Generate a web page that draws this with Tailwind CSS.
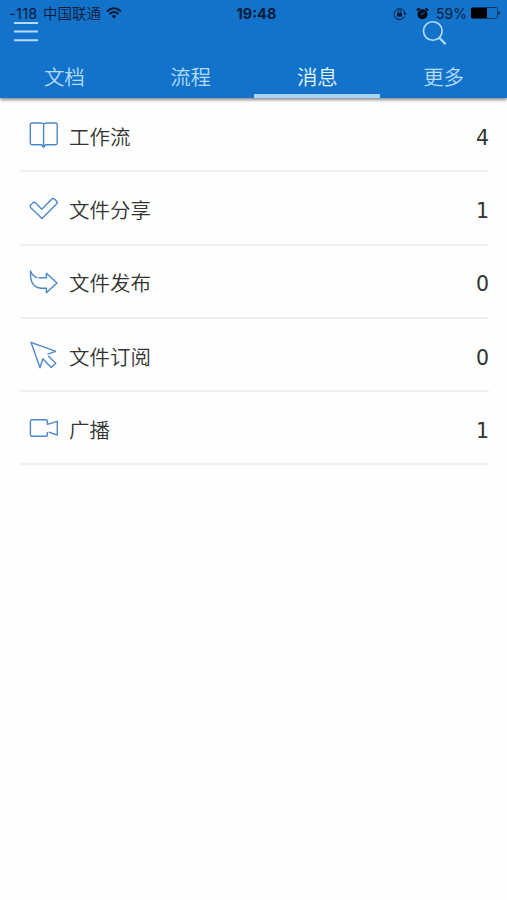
<!DOCTYPE html>
<html lang="zh-CN">

<head>
    <meta charset="UTF-8">
    <meta name="viewport" content="width=device-width, initial-scale=1.0">
    <title>消息</title>
    <script src="https://cdn.jsdelivr.net/npm/@tailwindcss/browser@4"></script>
</head>

<body class="min-h-screen overflow-hidden bg-[#fefefe] font-['Noto_Sans_CJK_SC_DemiLight','Noto_Sans_CJK_SC',sans-serif] font-[350] text-[#333]">
    <header class="flex h-[98px] flex-col bg-[#1373ca] shadow-[0_2px_3px_rgba(0,0,0,0.45)]">
        <!-- status bar -->
        <div class="grid h-[22px] grid-cols-3 pt-[5px] pr-[7px] pl-[9px] text-[14px] leading-[18px] font-normal text-[#061c38]">
            <div class="flex items-center gap-[5px] whitespace-nowrap">
                <span class="w-[29px] font-['Inter','Liberation_Sans',sans-serif] text-[14.5px] tracking-[0.3px]">-118</span>
                <span class="-translate-y-px text-[14.5px]">中国联通</span>
                <svg class="h-[12px] w-[16px] -translate-y-px" viewBox="0 0 16 12" fill="none" stroke="currentColor" stroke-width="2">
                    <path d="M1 4.4Q8 -1.8 15 4.4M3.4 7Q8 3 12.6 7" />
                    <path d="M5.5 9Q8 7 10.5 9L8 11.6Z" fill="currentColor" stroke="none" />
                </svg>
            </div>
            <div class="pl-[4px] text-center font-['Inter',sans-serif] text-[14.5px] font-bold">19:48</div>
            <div class="flex items-center justify-end font-['Inter','Liberation_Sans',sans-serif]">
                <svg class="mr-[9px] h-[13px] w-[14px] -translate-y-px" viewBox="0 0 14 13" fill="none" stroke="currentColor">
                    <path d="M11.5 9.5A5.5 5.5 0 1 1 12 6.5" />
                    <path d="M10.3 6h3.4L12 8.3Z" fill="currentColor" stroke="none" />
                    <path d="M4 6h5v3.6H4Z" fill="currentColor" stroke="none" />
                    <path d="M5 6V4.7a1.5 1.5 0 0 1 3 0V6" />
                </svg>
                <svg class="mr-[7px] h-[13px] w-[13px] -translate-y-px text-[#020a14]" viewBox="0 0 13 13">
                    <circle cx="6.5" cy="7.2" r="5" fill="currentColor" />
                    <path d="M.8 3.5L3.6 1.2M12.2 3.5L9.4 1.2" stroke="currentColor" stroke-width="1.8" />
                    <path d="M8.6 5L6.5 7.2H4.5" fill="none" stroke="#1373ca" stroke-width=".9" />
                </svg>
                <span class="mr-[4px]">59%</span>
                <svg class="h-[12px] w-[29px] shrink-0 -translate-y-px" viewBox="0 0 29 12">
                    <rect x=".5" y=".5" width="26" height="11" rx="1" fill="none" stroke="currentColor" stroke-width=".7" />
                    <rect x="0" y="1" width="16" height="10" fill="#000" />
                    <path d="M27.5 4v4Q29 7.5 29 6T27.5 4Z" fill="currentColor" />
                </svg>
            </div>
        </div>

        <!-- toolbar -->
        <div class="flex h-[33px] items-start justify-between pr-[60px] pl-[14px] text-[#b5dcff]">
            <svg class="h-[20px] w-[24px]" viewBox="0 0 24 20" fill="none" stroke="currentColor" stroke-width="1.9">
                <path d="M0 1h24M0 9.5h24M0 18.3h24" />
            </svg>
            <svg class="h-[25px] w-[25px] overflow-visible" viewBox="0 0 25 25" fill="none" stroke="currentColor">
                <circle cx="10.8" cy="9" r="9.3" stroke-width="1.6" />
                <path d="M17.3 15.7L23.6 22.2" stroke-width="2.3" />
            </svg>
        </div>

        <!-- tabs -->
        <nav class="grid flex-1 grid-cols-4 text-center text-[20.5px] leading-[43px] text-[#b5dcff]">
            <div class="pt-1 pl-[2px]">文档</div>
            <div class="pt-1 pl-px">流程</div>
            <div class="border-b-4 border-[#a9d3f8] text-[#e3f4ff]"><div class="h-[39px] pt-1 pl-px">消息</div></div>
            <div class="pt-1">更多</div>
        </nav>
    </header>

    <main class="mr-[18px] ml-[20px] pt-[1px] text-[20.5px]">
        <div class="flex h-[73.25px] items-center border-b-2 border-[#efefef] pt-[3px] pl-[9px]">
            <svg class="mr-[10px] h-[30px] w-[30px] -translate-y-px" viewBox="0 0 30 30" fill="none" stroke="#4c88c9" stroke-width="1.4" stroke-linejoin="round">
                <path d="M14.6 4.2Q13.8 3 12 3H3Q1.3 3 1.3 4.7V23Q1.3 24.7 3 24.7H12.5L14.6 27.2L16.7 24.7H26.5Q28.2 24.7 28.2 23V4.7Q28.2 3 26.5 3H17.2Q15.4 3 14.6 4.2V26" />
            </svg>
            <span class="flex-1">工作流</span>
            <span class="translate-y-[2px] font-['DejaVu_Sans',sans-serif] text-[20.5px] font-normal">4</span>
        </div>
        <div class="flex h-[73.25px] items-center border-b-2 border-[#efefef] pt-[3px] pl-[9px]">
            <svg class="mr-[10px] h-[30px] w-[30px] -translate-y-px" viewBox="0 0 30 30" fill="none" stroke="#4c88c9" stroke-width="1.4" stroke-linejoin="round">
                <path d="M1.5 12.3L4 9.8Q5.3 8.7 6.7 10L12.8 16.2L22.6 6.2Q24 4.8 25.4 6L27.7 8.2Q28.8 9.5 27.5 11L13 25.4L1.5 14.4Q.7 13.3 1.5 12.3Z" />
            </svg>
            <span class="flex-1">文件分享</span>
            <span class="translate-y-[2px] font-['DejaVu_Sans',sans-serif] text-[20.5px] font-normal">1</span>
        </div>
        <div class="flex h-[73.25px] items-center border-b-2 border-[#efefef] pt-[3px] pl-[9px]">
            <svg class="mr-[10px] h-[30px] w-[30px] -translate-y-px" viewBox="0 0 30 30" fill="none" stroke="#4c88c9" stroke-width="1.4" stroke-linejoin="round">
                <path d="M8.3 10.8Q3.5 9 1.5 4Q.7 20.8 12 21.2H17.4V25.7L28 16L17.4 6.2V10.7H9.5" />
            </svg>
            <span class="flex-1">文件发布</span>
            <span class="translate-y-[2px] font-['DejaVu_Sans',sans-serif] text-[20.5px] font-normal">0</span>
        </div>
        <div class="flex h-[73.25px] items-center border-b-2 border-[#efefef] pt-[3px] pl-[9px]">
            <svg class="mr-[10px] h-[30px] w-[30px] -translate-y-px" viewBox="0 0 30 30" fill="none" stroke="#4c88c9" stroke-width="1.4" stroke-linejoin="round">
                <path d="M26.8 11.4L2 2.3L11 27.8L13.8 18.8L22.2 27.6L26.8 23.2L19.2 16" />
                <path d="M26.8 11.4L18.5 14.2" />
            </svg>
            <span class="flex-1">文件订阅</span>
            <span class="translate-y-[2px] font-['DejaVu_Sans',sans-serif] text-[20.5px] font-normal">0</span>
        </div>
        <div class="flex h-[73.25px] items-center border-b-2 border-[#efefef] pt-[3px] pl-[9px]">
            <svg class="mr-[10px] h-[30px] w-[30px] -translate-y-px" viewBox="0 0 30 30" fill="none" stroke="#4c88c9" stroke-width="1.4" stroke-linejoin="round">
                <path d="M18.4 19V21.5Q18.4 23.3 16.6 23.3H3.2Q1.4 23.3 1.4 21.5V8.5Q1.4 6.7 3.2 6.7H16.6Q18.4 6.7 18.4 8.5V11.4L28.3 8.3V22L19.8 19.2" />
            </svg>
            <span class="flex-1">广播</span>
            <span class="translate-y-[2px] font-['DejaVu_Sans',sans-serif] text-[20.5px] font-normal">1</span>
        </div>
    </main>
</body>

</html>
